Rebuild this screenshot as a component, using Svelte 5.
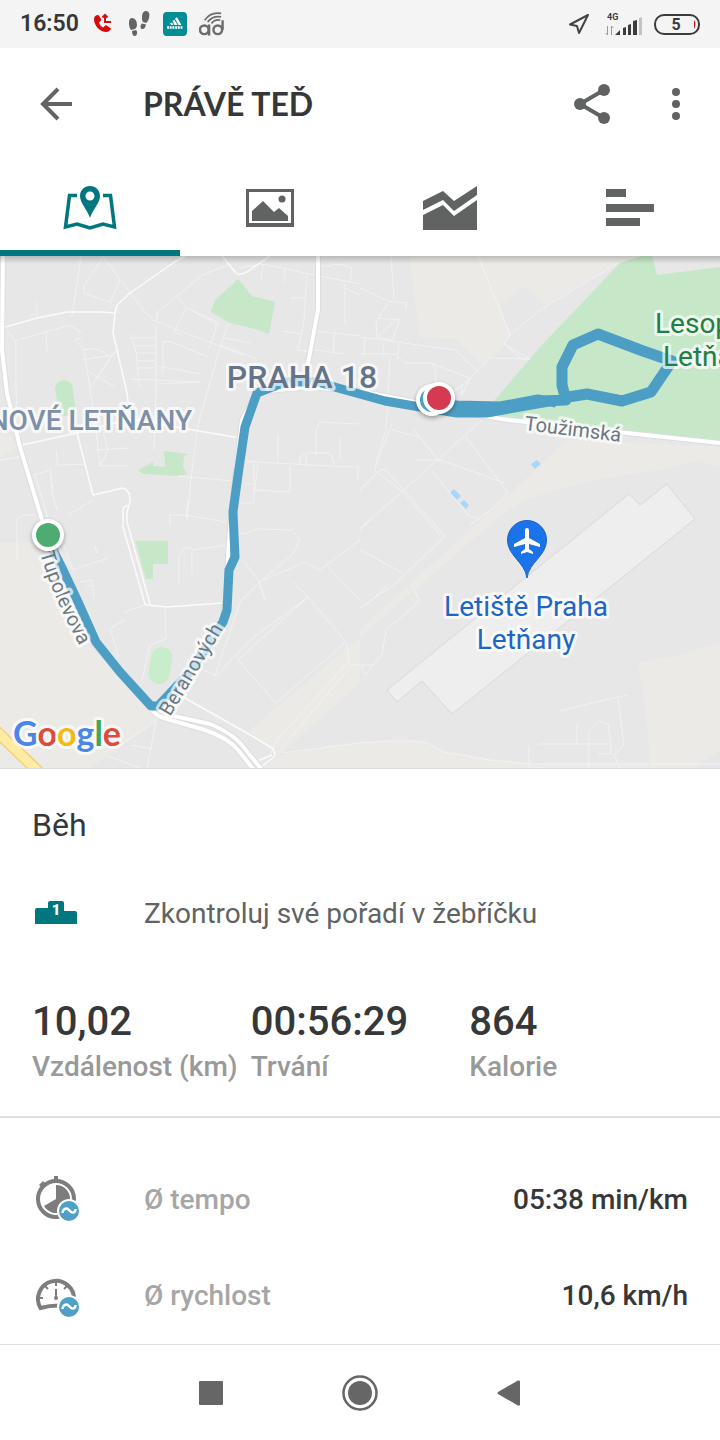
<script lang="ts">
	type TabName = "map" | "photo" | "chart" | "splits";

	interface Tab {
		name: TabName
		label: string
	}

	const tabs: Tab[] = [
		{ name: "map", label: "Mapa" },
		{ name: "photo", label: "Fotky" },
		{ name: "chart", label: "Grafy" },
		{ name: "splits", label: "Mezičasy" },
	];

	const stats = [
		{ value: "10,02", label: "Vzdálenost (km)" },
		{ value: "00:56:29", label: "Trvání" },
		{ value: "864", label: "Kalorie" },
	];

	const averages = [
		{ icon: "pace", label: "Ø tempo", value: "05:38 min/km" },
		{ icon: "speed", label: "Ø rychlost", value: "10,6 km/h" },
	];

	const fields = [
		"M409 256L420 338L455 339L483 367L505 345L511 334L500 305L525 286L545 305L575 287L620 263L650 256Z",
		"M567 440L720 447V468L697 460L660 470L593 480L527 499L505 512L360 637L250 730L277 757L360 683L360 629L503 500L530 475Z",
		"M0 543H35L95 645L152 712L157 722L90 768H0Z",
		"M277 757L330 745L400 739L427 741L443 750L490 759L527 763L650 765V768H262Z",
		"M638 662L680 655L720 642V750L693 768H650L648 733L642 685Z",
		"M0 430L10 435L17 447L0 458Z",
	];

	const parks = [
		"M493 402L540 347L620 263L642 256H652L657 275L720 267V441L627 432L490 416Z",
		"M238 279L252 296L275 302L269 334L255 329L230 323L211 312L215 300Z",
		"M55 389a9 9 0 0 1 18 0l3 27H60z",
		"M164 451L189 454L184 456L183 467L187 474L177 476L143 474L138 470L153 462V466L165 467Z",
		"M135 541H168V564H153V579H146Z",
	];

	const lanes = [
		"M81 256L72 316M103 257L84 285V293L110 302L120 280M103 257L145 312L153 320L178 330L243 355",
		"M110 302L120 313M228 265L202 275L177 296L157 313V320M177 296L186 308L174 332M186 308L216 321",
		"M37 302V316L31 314M7 330L15 341L70 325L82 333M16 340V386L18 440M46 331L47 352",
		"M75 340L84 350L88 376L95 420L100 466L128 466M75 340L82 338M82 350Q100 345 110 358L90 388M82 360L112 355L120 350",
		"M87 371L115 387M90 388L116 350M94 441L100 435M95 450L128 448M100 466L108 450L97 410",
		"M130 334L136 352L138 375L140 388M130 338H155M134 346H155M136 353H156M138 361H155M138 368H155",
		"M156 325V390L154 450M163 374V342L172 342L208 357M157 366L201 374M157 384L198 382M130 379L201 382",
		"M220 345L257 359M229 323L221 344L198 425L192 470L187 520M224 338L251 343M216 321V330L209 348",
		"M187 308L219 325M174 332L182 335M239 268L263 264L305 273L360 284M263 264L261 280M285 268V282",
		"M307 273L304 320L298 350M290 298H306M283 331L302 334M297 350L310 352M318 267L340 264L352 268L350 282",
		"M345 283V324M345 288L360 295M316 331L360 336M335 332L333 352M315 350L345 354",
		"M316 455V430L320 422L360 424M316 428M278 435V462M340 438V460M240 461L330 466L360 467M254 464V490L290 492V466M240 503H253L258 465",
		"M300 465V458Q304 452 312 453H330L335 465M306 466V455M358 468V480M246 484H253M178 476L232 481",
		"M20 457L0 460M56 450L58 467M68 515L93 500M60 465L85 464M50 468L52 492L57 510M35 475L50 470L53 490M35 475L48 518",
		"M360 288L388 301L406 303M388 303L376 322L377 337L393 340L399 320L378 318M377 337L398 318M406 303V310M391 256L394 300",
		"M360 337L455 350L478 372M365 338L364 355M384 343L382 358M399 345L397 360M360 354H395L405 363H430L470 378",
		"M472 378L432 408L462 385L462 395L470 378M434 365L437 390M390 358L386 430L374 470M392 424L375 468",
		"M478 256L510 335L504 344L522 359H530M510 335L540 310L618 263M504 344L530 359L491 358L471 377",
		"M482 420L415 480L372 518L360 530M415 460L440 460L505 483M466 437L508 493L493 508L470 525M438 460L420 437L392 430",
		"M414 430L440 462M432 471L468 515L481 520M360 490L380 470H386M386 470L445 536M374 470L403 492L440 535",
		"M372 518L360 528M445 536L395 584L360 608M360 550L403 573M388 585L370 602L363 606M412 585L419 600L412 608L386 630L382 655L365 675L361 665H373",
		"M17 560V520L22 515H35M55 520L73 570L108 558M73 570L60 552M80 582L92 580L94 598M86 587L93 585",
		"M97 553L95 546M125 612L147 604M165 607L166 638M142 680L150 645L167 638M110 628L125 620M110 628L118 655L116 660",
		"M169 515H185L226 522M186 517L188 500M179 584V556L184 548H192M192 575V550L228 545M170 526V515",
		"M239 534L247 533L257 529L292 530L300 540L292 555L260 582L240 602M243 560L258 580L265 600L259 582L305 562L320 570L360 540",
		"M328 567L360 600M293 582L308 597L346 642L276 703L238 660L308 597M308 597L250 640L216 676L203 670M240 602L215 676",
		"M346 642L350 665H360M350 667L282 748M277 740L270 755M350 660L277 740M157 716L147 768M157 720L120 745M131 745L152 749M105 755L140 768",
		"M559 711L627 695M618 698L624 745L614 755L620 768M577 724V744M539 744H611M589 768V730L600 721L608 724L611 744V754H598M529 746V768L545 768",
		"M283 753L360 743M360 743Q420 738 432 745L443 752L490 760L527 764H720",
	];

	const streets = [
		"M2 328L37 318L67 312H100L115 313L117 305L130 293L173 263L185 256",
		"M115 313L113 333L127 393L128 402",
		"M22 445L77 433L130 419L193 430L240 438",
		"M77 433L93 495L123 488Q130 490 130 500L129 506",
		"M129 506Q124 505 123 510V527L145 604L147 605L167 607L222 603",
		"M129 506L127 512V522L150 604",
		"M222 256L236 273Q239 276 247 272L270 256",
		"M183 697L247 733L272 748Q277 753 273 758L262 766L253 768",
		"M247 762L260 760L272 755",
	];

	const mainRoads = [
		"M3 256L2 350L7 393L20 447L42 520L60 570L95 645L152 710Q157 717 170 720L205 730Q228 738 238 750L254 770",
		"M318 256V310L308 363V388",
		"M160 712L222 622L226 600L229 540L236 470L242 420L257 392L308 387L360 391L420 403L500 419L627 433L720 443",
		"M165 714L210 724Q230 732 241 744L262 770",
	];

	const routes = [
		"M48 540L62 568L78 602L96 642L120 672L151 706H158L190 672L223 622L227 610L229 570L235 557L233 512L238 475L245 427L257 393L285 382L318 382L338 388L385 401L420 407L457 413H487L560 400",
		"M430 402L457 405L500 406L538 399L556 403",
	];
	const loop = "M540 401L566 400L562 385V367L573 345L598 334L643 351L672 361L651 392L622 401L587 394L562 398";

	let active = $state<TabName>("map");
</script>

<header class="statusbar">
	<div class="statusgroup">
		<time>16:50</time>
		<svg width="24" height="26" viewBox="0 0 24 26">
			<path fill="#d80b0b" d="M5 4.500c-2 1-2.500 3.500-1.500 7 1.500 5 6.500 9.500 11.500 9.500 2.500 0 4.500-1.500 5-3.500l-5-3.500-3 2.500c-2-1-3.500-3-4-5l2.500-2.500L8 4.500c-1-.8-2-.6-3 0z" />
			<path fill="none" stroke="#d80b0b" stroke-width="2" d="M14 4v7h6M11.500 6.500L14 4l2.500 2.500" />
		</svg>
		<svg width="24" height="28" viewBox="0 0 24 28" fill="#646464">
			<path d="M5 8c3 0 5 3 5 7 0 2-1 3-2 4l-4 1c-2-3-2-5-2-8 0-2 1-4 3-4zM5 21l4-1c2 2 1 6-1 6s-3-2-3-5z" />
			<path d="M19 1c3 0 4 3 3 7-.5 2-1.500 4-3 5l-3-1c-1-1-1-3-1-5 0-4 2-6 4-6zM15 13.500l4 1c-.5 3-2 5-4 4.500s-2-4 0-5.500z" />
		</svg>
		<svg width="24" height="24" viewBox="0 0 24 24">
			<rect width="24" height="24" rx="4" fill="#008d93" />
			<path fill="#fff" d="M12 6.500l2-1.200 4.500 7.700h-3zM9.500 9l2-1.200 3 5.200h-3zM7 11.500l2-1 1.500 2.500H8z" />
			<path stroke="#fff" stroke-width="2.500" stroke-dasharray="2 .7" d="M4 15.500h16" />
		</svg>
		<svg width="26" height="26" viewBox="0 0 27 26" fill="none" stroke="#6c6c6c" stroke-width="2.500">
			<circle cx="5.500" cy="19" r="4.500" />
			<circle cx="19.500" cy="19" r="4.500" />
			<path d="M10.500 13.500V25M24.500 9v10" />
			<path stroke-width="1.800" d="M6 9Q12 0 23 2M9 11Q14 4 23 5.500M13 12.500Q16 8 22 9" />
		</svg>
	</div>
	<div class="statusgroup">
		<svg width="24" height="24" viewBox="0 0 24 24" fill="none" stroke="#444" stroke-width="2" stroke-linejoin="round">
			<path d="M22 3L4 12.500l7 1.500 2 7z" />
		</svg>
		<svg width="40" height="26" viewBox="0 0 40 26">
			<text class="network" x="5" y="9">4G</text>
			<path stroke="#999" fill="none" d="M5.500 15v9M3.500 22l2 2M9.500 24v-9M9.500 15l2 2" />
			<path fill="#3c3c3c" d="M13 24l5-5v5zM21 17l3-1v8h-3zM26 14l3-1v11h-3zM31 10l4-1v15h-4z" />
			<path fill="#c3c3c3" d="M37 7l3-1v18h-3z" />
		</svg>
		<svg width="46" height="22" viewBox="0 0 46 22">
			<rect x="1" y="2" width="44" height="19" rx="9" fill="none" stroke="#3c3c3c" stroke-width="2" />
			<path fill="#d32020" d="M40 7q3 4 0 9z" />
			<text class="charge" x="22" y="17" text-anchor="middle">5</text>
		</svg>
	</div>
</header>

<div class="appbar">
	<button class="iconbutton" aria-label="Zpět">
		<svg width="34" height="34" viewBox="0 0 34 34" fill="none" stroke="#636363" stroke-width="4">
			<path d="M33 17H5M19 2L4 17l15 15" />
		</svg>
	</button>
	<h1>PRÁVĚ TEĎ</h1>
	<button class="iconbutton" aria-label="Sdílet">
		<svg width="36" height="40" viewBox="0 0 36 40" fill="#616362">
			<path stroke="#616362" stroke-width="4" fill="none" d="M30 6L6 20l24 14" />
			<circle cx="30" cy="6" r="6" />
			<circle cx="6" cy="20" r="6" />
			<circle cx="30" cy="34" r="6" />
		</svg>
	</button>
	<button class="iconbutton menu" aria-label="Další možnosti">
		<svg width="8" height="32" viewBox="0 0 8 32" fill="#616362">
			<circle cx="4" cy="4" r="4" />
			<circle cx="4" cy="16" r="4" />
			<circle cx="4" cy="28" r="4" />
		</svg>
	</button>
</div>

<nav class="tabs">
	{#each tabs as { name, label }}
		<button class:active={active === name} aria-label={label} onclick={() => (active = name)}>
			<svg width="54" height="44" viewBox="0 0 54 44" fill="currentColor">
				{#if name === "map"}
					<path fill="none" stroke="currentColor" stroke-width="3.500" d="M14 9.500H6.500L2.500 41l11.500-3 13 4 13-4 11.500 3L47.500 9.500H40" />
					<path fill-rule="evenodd" d="M27 0c-6 0-10 4.500-10 10 0 7 7 13 10 22 3-9 10-15 10-22 0-5.500-4-10-10-10zm0 5.500a4.500 4.500 0 1 1 0 9 4.500 4.500 0 0 1 0-9z" />
				{:else if name === "photo"}
					<path fill-rule="evenodd" d="M3 3h48v38H3zM6 6v31h42V6z" />
					<path d="M9 25L20 15l11 11 5-4 9 8v5H9z" />
					<circle cx="39" cy="13" r="3.500" />
				{:else if name === "chart"}
					<path d="M0 15L20 5l11 10L54 0v9L31 25 20 14 0 24zM0 29L20 19l11 11L54 14v30H0z" />
				{:else}
					<path d="M3 3h20v8H3zM3 18h48v8H3zM3 32h34v8H3z" />
				{/if}
			</svg>
		</button>
	{/each}
</nav>

<div class="map">
	<svg viewBox="0 256 720 512" role="img" aria-label="Mapa trasy">
		<defs>
			<linearGradient id="edge" x2="0" y2="1">
				<stop stop-opacity=".2" />
				<stop offset="1" stop-opacity="0" />
			</linearGradient>
		</defs>
		<rect y="256" width="720" height="512" fill="#e7e7e7" />
		{#each fields as d}
			<path {d} fill="#ebeae6" />
		{/each}
		{#each parks as d}
			<path {d} fill="#c6e8c8" />
		{/each}
		<rect x="150" y="647" width="21" height="37" rx="10" fill="#c8edca" transform="rotate(10 160 665)" />
		<path fill="#a9d7fb" d="M531 464l6-4 4 4-6 5zM450 493l4-4 7 7-4 4zM460 503l4-3 5 5-3 4z" />
		<path fill="#eee" stroke="#d9d9d9" d="M387 690L598 519L629 494L640 505L667 484L695 519L452 714L422 681L397 702Z" />

		<g class="lanes">
			{#each lanes as d}
				<path {d} />
			{/each}
		</g>
		<g class="streets">
			{#each streets as d}
				<path {d} />
			{/each}
		</g>
		<g class="roadedges">
			{#each mainRoads as d}
				<path {d} />
			{/each}
		</g>
		<g class="roads">
			{#each mainRoads as d}
				<path {d} />
			{/each}
		</g>
		<path d="M-5 730L42 775" stroke="#efd37c" stroke-width="12" />
		<path d="M-5 730L42 775" stroke="#ffeca2" stroke-width="9" />

		<g class="route">
			{#each routes as d}
				<path {d} />
			{/each}
			<path class="loop" d={loop} />
		</g>

		<path id="tupolevova" fill="none" d="M40 553Q53 598 82 650" />
		<path id="beranovych" fill="none" d="M170 717L226 624" />
		<text class="district" x="302" y="388" text-anchor="middle">PRAHA 18</text>
		<text class="quarter" x="192" y="430" text-anchor="end">NOVÉ LETŇANY</text>
		<text class="place forest" x="655" y="333">Lesopark</text>
		<text class="place forest" x="663" y="366">Letňany</text>
		<text class="place airport" x="526" y="616" text-anchor="middle">Letiště Praha</text>
		<text class="place airport" x="526" y="649" text-anchor="middle">Letňany</text>
		<text class="street" x="524" y="430" transform="rotate(7 524 430)">Toužimská</text>
		<text class="street"><textPath href="#tupolevova">Tupolevova</textPath></text>
		<text class="street"><textPath href="#beranovych">Beranových</textPath></text>

		<path fill="#1a73e8" stroke="#1b62c4" d="M527 578C525 562 507.500 556 507.500 540a19.500 19.500 0 0 1 39 0C546.500 556 529 562 527 578z" />
		<path fill="#fff" d="M525 530q0-2 2-2t2 2v8l11 6v3l-11-3v5l4 3v2l-6-2-6 2v-2l4-3v-5l-11 3v-3l11-6z" />

		<g class="marker">
			<circle cx="432" cy="400" r="14" fill="#4d9ec4" />
			<circle cx="439" cy="398" r="14" fill="#d63a52" />
			<circle cx="48" cy="535" r="14" fill="#4fac70" />
		</g>

		<text class="google" x="13" y="746"><tspan fill="#4a86e8">G</tspan><tspan fill="#de4a3d">o</tspan><tspan fill="#f3b912">o</tspan><tspan fill="#4a86e8">g</tspan><tspan fill="#3fa757">l</tspan><tspan fill="#de4a3d">e</tspan></text>
		<rect y="256" width="720" height="8" fill="url(#edge)" />
	</svg>
</div>

<main>
	<section class="summary">
		<h2>Běh</h2>
		<a class="ranking" href="#zebricek">
			<svg width="48" height="24" viewBox="0 0 48 24">
				<path fill="#00767e" d="M3 9q0-2 2-2h11V2q0-2 2-2h12q2 0 2 2v8h11q2 0 2 2v11H3z" />
				<text class="first" x="24" y="14" text-anchor="middle">1</text>
			</svg>
			<span>Zkontroluj své pořadí v žebříčku</span>
		</a>
		<dl class="stats">
			{#each stats as { value, label }}
				<div>
					<dt>{label}</dt>
					<dd>{value}</dd>
				</div>
			{/each}
		</dl>
	</section>

	<dl class="averages">
		{#each averages as { icon, label, value }}
			<div>
				<svg width="48" height="48" viewBox="0 0 48 48">
					{#if icon === "pace"}
						<circle cx="24" cy="24" r="18" fill="none" stroke="#7d7d7d" stroke-width="4" />
						<path fill="#7d7d7d" d="M22 1h4v4h-4zM7 10l4-4 2 2-4 4zM24 10a14 14 0 1 1-12 21l12-7z" />
					{:else}
						<path fill="none" stroke="#7d7d7d" stroke-width="4" d="M42 29A18 18 0 1 0 8.500 37Q17 34.500 27 34.500" />
						<path fill="none" stroke="#7d7d7d" stroke-width="2" d="M24 11v4M13 15l3 3M35 15l-3 3M7 27h4M24 18v9" />
						<circle cx="24" cy="27" r="2" fill="#7d7d7d" />
					{/if}
					<circle cx="37" cy="36" r="11" fill="#4da0c6" stroke="#fff" stroke-width="2" />
					<path fill="none" stroke="#fff" stroke-width="2.500" d="M30.500 38C31 33 35 32.500 37.500 35.500S43.500 38.500 43.500 34" />
				</svg>
				<dt>{label}</dt>
				<dd>{value}</dd>
			</div>
		{/each}
	</dl>
</main>

<footer class="systembar">
	<button aria-label="Poslední aplikace">
		<svg width="24" height="24" viewBox="0 0 24 24"><rect width="24" height="24" rx="1" fill="#666" /></svg>
	</button>
	<button aria-label="Domů">
		<svg width="36" height="36" viewBox="0 0 36 36">
			<circle cx="18" cy="18" r="16.500" fill="none" stroke="#666" stroke-width="2.500" />
			<circle cx="18" cy="18" r="12" fill="#666" />
		</svg>
	</button>
	<button aria-label="Zpět">
		<svg width="24" height="26" viewBox="0 0 24 26"><path fill="#666" d="M1 12L21 .5q2-.5 2 1v23q0 1.500-2 1L1 14q-1-1 0-2z" /></svg>
	</button>
</footer>

<style>
	:global(body) {
		margin: 0;
		background: #fff;
		color: #363738;
		font-family: Roboto, sans-serif;
	}

	svg {
		display: block;
		flex: none;
	}

	button {
		display: flex;
		align-items: center;
		justify-content: center;
		margin: 0;
		padding: 0;
		border: 0;
		background: none;
		cursor: pointer;
	}

	h1, h2, dl, dt, dd {
		margin: 0;
	}

	.statusbar {
		display: flex;
		align-items: center;
		justify-content: space-between;
		height: 48px;
		padding: 0 20px;
		background: #f4f4f4;
	}

	.statusgroup {
		display: flex;
		align-items: center;
		gap: 12px;

		time {
			font-size: 23px;
			font-weight: 600;
			line-height: 32px;
		}
	}

	.network {
		font-size: 9px;
		font-weight: 700;
		fill: #3c3c3c;
	}

	.charge {
		font-size: 16px;
		font-weight: 700;
		fill: #3c3c3c;
	}

	.appbar {
		display: flex;
		align-items: center;
		height: 112px;
		padding: 0 16px;

		h1 {
			flex: 1;
			padding-left: 47px;
			font-family: Lato, sans-serif;
			font-size: 32px;
			font-weight: 700;
			line-height: 40px;
		}
	}

	.iconbutton {
		width: 80px;
		height: 80px;
	}

	.menu {
		width: 56px;
		margin-left: 16px;
	}

	.tabs {
		display: flex;
		height: 96px;

		button {
			flex: 1;
			border-top: 6px solid transparent;
			border-bottom: 6px solid transparent;
			color: #616362;

			&.active {
				border-bottom-color: #00767e;
				color: #00767e;
			}
		}
	}

	.map {
		svg {
			width: 100%;
			height: auto;
		}

		text {
			paint-order: stroke;
			stroke: rgb(255 255 255 / 70%);
			stroke-width: 6px;
			stroke-linejoin: round;
		}
	}

	.lanes, .streets, .roads, .roadedges, .route {
		fill: none;
		stroke: #fff;
		stroke-linejoin: round;
	}

	.lanes {
		stroke: #f1f2f4;
		stroke-width: 1px;
	}

	.streets {
		stroke: #fbfbfb;
		stroke-width: 1.5px;
	}

	.roadedges {
		stroke: #dcdddf;
		stroke-width: 6px;
	}

	.roads {
		stroke-width: 4px;
	}

	.route {
		stroke: #4d9ec4;
		stroke-width: 9px;
	}

	.loop {
		stroke-width: 11px;
	}

	.marker {
		stroke: #fff;
		stroke-width: 4px;
		filter: drop-shadow(0 2px 2px rgb(0 0 0 / 35%));
	}

	.district {
		font-size: 32px;
		font-weight: 500;
		fill: #667488;
	}

	.quarter {
		font-size: 28px;
		font-weight: 500;
		fill: #7e8fa8;
	}

	.place {
		font-size: 28px;
	}

	.forest {
		fill: #1f8043;
	}

	.airport {
		fill: #2065c5;
	}

	.street {
		font-size: 20px;
		fill: #6b7782;
	}

	.google {
		font-family: Lato, sans-serif;
		font-size: 34px;
		font-weight: 700;
	}

	.summary {
		padding: 36px 32px 28px;
		border-top: 1px solid #ddd;
		border-bottom: 2px solid #e0e0e0;

		h2 {
			font-size: 32px;
			font-weight: 400;
			line-height: 40px;
		}
	}

	.ranking {
		display: flex;
		align-items: center;
		gap: 64px;
		height: 96px;
		margin-top: 20px;
		color: #616362;
		font-size: 28px;
		text-decoration: none;
	}

	.first {
		font-size: 15px;
		font-weight: 900;
		fill: #fff;
	}

	.stats {
		display: grid;
		grid-template-columns: repeat(3, 1fr);
		margin-top: 37px;

		div {
			display: flex;
			flex-direction: column-reverse;
		}

		dt {
			color: #999;
			font-size: 28px;
			font-weight: 500;
			line-height: 42px;
			white-space: nowrap;
		}

		dd {
			font-size: 40px;
			font-weight: 500;
			line-height: 48px;
		}
	}

	.averages {
		padding: 33px 0 1px;

		div {
			display: flex;
			align-items: center;
			height: 96px;
			padding: 0 32px;
		}

		dt {
			flex: 1;
			padding-left: 64px;
			color: #a6a6a6;
			font-size: 28px;
			font-weight: 500;
		}

		dd {
			font-size: 28px;
			font-weight: 500;
		}
	}

	.systembar {
		display: flex;
		justify-content: center;
		border-top: 1px solid #e0e0e0;

		button {
			width: 149px;
			height: 95px;
		}
	}
</style>
